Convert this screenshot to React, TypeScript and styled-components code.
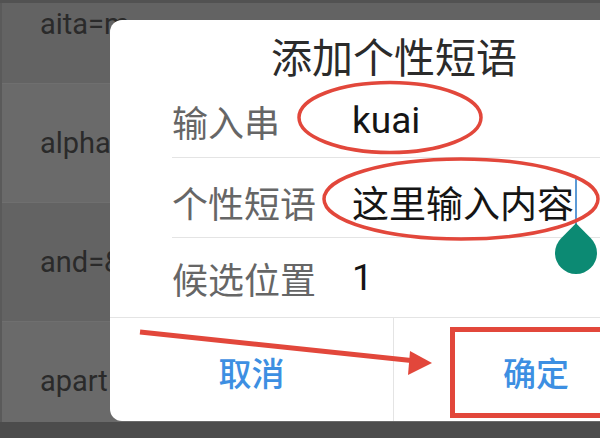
import React from 'react';
import styled, { createGlobalStyle } from 'styled-components';

const GlobalStyle = createGlobalStyle`
  html, body {
    margin: 0;
    padding: 0;
    width: 600px;
    height: 438px;
    overflow: hidden;
  }
  body {
    font-family: Roboto, "Noto Sans CJK SC", sans-serif;
    background: #666;
  }
`;

const Screen = styled.div`
  position: relative;
  width: 600px;
  height: 438px;
  overflow: hidden;
  display: flex;
  flex-direction: column;
`;

const TopEdge = styled.div`
  height: 3px;
  flex-shrink: 0;
  background: #525252;
`;

const List = styled.div`
  flex: 1;
  overflow: hidden;
  border-left: 2px solid #5a5a5a;
`;

const ListInner = styled.div`
  margin-top: -38px;
`;

const ListRow = styled.div<{ $alt: boolean }>`
  height: 119px;
  box-sizing: border-box;
  display: flex;
  align-items: center;
  padding-left: 38px;
  background: ${({ $alt }) => ($alt ? '#6a6a6a' : '#636363')};
  border-bottom: 1px solid #6f6f6f;
  font-size: 29px;
  color: #2a2a2a;
`;

const NavBar = styled.div`
  height: 16px;
  flex-shrink: 0;
  background: #4c4c4c;
`;

const Dialog = styled.div`
  position: absolute;
  left: 110px;
  top: 20px;
  width: 568px;
  height: 401px;
  background: #fff;
  border-radius: 12px;
  display: flex;
  flex-direction: column;
  overflow: hidden;
  font-family: Roboto, "Noto Sans CJK SC", sans-serif;
`;

const Title = styled.div`
  height: 64px;
  box-sizing: border-box;
  padding-top: 6px;
  display: flex;
  align-items: center;
  justify-content: center;
  font-family: "Noto Sans CJK SC", sans-serif;
  font-size: 41px;
  color: #2b2b2b;
`;

const Row = styled.div<{ $h: number; $shift?: number; $line?: boolean }>`
  height: ${({ $h }) => $h}px;
  box-sizing: border-box;
  margin-left: 62px;
  padding-top: ${({ $shift }) => $shift || 0}px;
  display: flex;
  align-items: center;
  border-bottom: ${({ $line }) => ($line ? '1px solid #e4e4e4' : 'none')};
`;

const Label = styled.div`
  width: 180px;
  flex-shrink: 0;
  font-family: "Noto Sans CJK SC", sans-serif;
  font-size: 36px;
  color: #666;
`;

const Value = styled.div`
  font-size: 37px;
  color: #151515;
  white-space: nowrap;
  display: flex;
  align-items: center;
`;

const Caret = styled.span`
  position: relative;
  display: inline-block;
  width: 2px;
  height: 46px;
  margin-left: 1px;
  background: #5b9ad6;
`;

const Handle = styled.svg`
  position: absolute;
  top: calc(100% - 2px);
  left: -21px;
  width: 44px;
  height: 52px;
`;

const Buttons = styled.div`
  flex: 1;
  display: grid;
  grid-template-columns: 284px 1fr;
  border-top: 1px solid #e4e4e4;
`;

const ActionButton = styled.div<{ $divider?: boolean }>`
  display: flex;
  align-items: center;
  justify-content: center;
  padding-top: 4px;
  font-family: "Noto Sans CJK SC", sans-serif;
  font-size: 33px;
  font-weight: 500;
  color: #3d8fe2;
  border-right: ${({ $divider }) => ($divider ? '1px solid #e4e4e4' : 'none')};
`;

const Marks = styled.svg`
  position: absolute;
  left: 0;
  top: 0;
  width: 600px;
  height: 438px;
  pointer-events: none;
`;

const listItems = ['aita=m', 'alpha=α', 'and=&', 'apart'];

const App = () => {
  return (
    <Screen>
      <GlobalStyle />
      <TopEdge />
      <List>
        <ListInner>
          {listItems.map((item, i) => (
            <ListRow key={item} $alt={i % 2 === 1}>
              {item}
            </ListRow>
          ))}
        </ListInner>
      </List>
      <NavBar />

      <Dialog>
        <Title>添加个性短语</Title>
        <Row $h={74} $line>
          <Label>输入串</Label>
          <Value>kuai</Value>
        </Row>
        <Row $h={80} $shift={8} $line>
          <Label>个性短语</Label>
          <Value>
            这里输入内容
            <Caret>
              <Handle viewBox="0 0 44 52">
                <path d="M22 0.3 L36.85 15.15 A21 21 0 1 1 7.15 15.15 Z" fill="#0c8a73" />
              </Handle>
            </Caret>
          </Value>
        </Row>
        <Row $h={79}>
          <Label>候选位置</Label>
          <Value>1</Value>
        </Row>
        <Buttons>
          <ActionButton $divider>取消</ActionButton>
          <ActionButton>确定</ActionButton>
        </Buttons>
      </Dialog>

      <Marks viewBox="0 0 600 438">
        <g fill="none" stroke="#e2473b">
          <ellipse cx="390" cy="117.5" rx="91" ry="35" strokeWidth="3.5" />
          <ellipse cx="461" cy="199" rx="137" ry="40" strokeWidth="3.5" />
          <line x1="140" y1="332" x2="416" y2="361" strokeWidth="5" />
          <rect x="452.5" y="329.5" width="170" height="86" strokeWidth="5" />
        </g>
        <polygon points="432,363 410,351 408,375" fill="#e2473b" />
      </Marks>
    </Screen>
  );
};

export default App;
